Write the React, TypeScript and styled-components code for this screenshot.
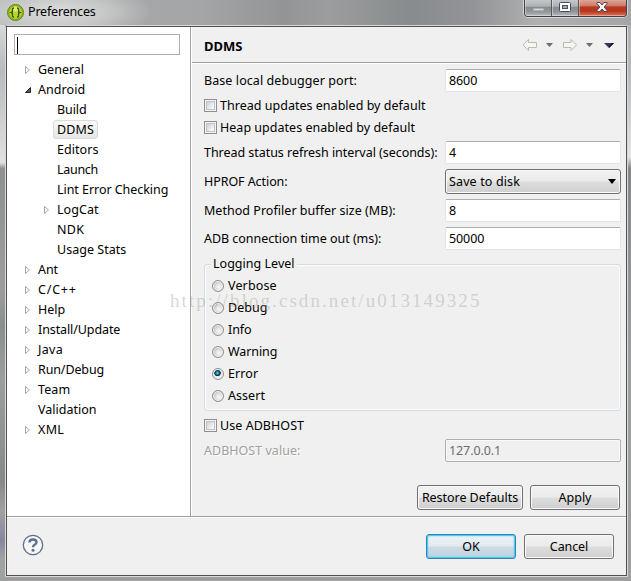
import React from 'react';
import styled, { createGlobalStyle, css } from 'styled-components';

const GlobalStyle = createGlobalStyle`
  * { box-sizing: border-box; }
  body { margin: 0; overflow: hidden; background: #9a9d9d; }
  body, input, button { font: 12.5px/20px "Noto Sans", "Open Sans", sans-serif; color: #000; }
`;

const Window = styled.main`
  position: relative;
  width: 631px;
  height: 581px;
  padding: 0 3px 4px 5px;
  display: flex;
  flex-direction: column;
  overflow: hidden;
  background:
    linear-gradient(#e9eaea, #b7bbbd 12%, #e0e1e1 28%, #8e9191 29%, #9b9e9d 50%, #898e8f 56%, #9c9f9f 65%, #858988 83%, #a0a2a1 88%, #8786a0 93%, #9fa2a2 96%) 0 0 / 5px 100% no-repeat,
    linear-gradient(#adb1b3, #b6b8ba 12%, #e4e4e4 27%, #858687 29%, #9d9fa0 60%, #a0a0a0) right top / 4px 100% no-repeat,
    #9e9e9e;
`;

const TitleBar = styled.header`
  height: 25px;
  margin: 0 -3px 0 -5px;
  padding: 0 4px 0 7px;
  flex: none;
  display: flex;
  align-items: flex-start;
  gap: 5px;
  background:
    radial-gradient(ellipse 95px 28px at 58px 12px, #dcdddd 0, rgba(205, 207, 207, .75) 55%, transparent 100%),
    linear-gradient(90deg, #b5b8b8 0, #a5a7a8 20%, #a3a5a6 32%, #929496 45%, #9b9d9e 52%, #888b8d 65%, #929497 75%, #b0b0b1 85%, #a3a5a7 100%);
`;

const AppIcon = styled.svg`
  width: 17px;
  height: 17px;
  margin-top: 4px;
  flex: none;
`;

const Title = styled.h1`
  flex: 1;
  margin: 2px 0 0 -1px;
  font: inherit;
  letter-spacing: -0.18px;
`;

const Controls = styled.div`
  display: flex;
  width: 103px;
  height: 17px;
  border: 1px solid #3d4147;
  border-top: 0;
  border-radius: 0 0 4px 4px;
  box-shadow: 0 0 0 1px rgba(235, 237, 238, .65);
  overflow: hidden;
`;

const Control = styled.button<{ $close?: boolean }>`
  flex: ${p => (p.$close ? '0 0 47px' : '0 0 27px')};
  padding: 0;
  display: flex;
  align-items: flex-start;
  justify-content: center;
  border: 0;
  border-right: 1px solid ${p => (p.$close ? 'transparent' : '#53585c')};
  box-shadow: inset 1px -1px rgba(255, 255, 255, .38);
  background: ${p => p.$close
    ? 'linear-gradient(#dda69b 0, #ce7868 38%, #b73b25 42%, #b5351c 68%, #df7358 100%)'
    : 'linear-gradient(#c4c7c9 0, #adb1b4 40%, #85898c 43%, #92969a 72%, #b6babd 100%)'};
  svg { display: block; margin-top: 1px; }
`;

const Client = styled.div`
  flex: 1;
  min-height: 0;
  display: flex;
  flex-direction: column;
  border: 1px solid #d9dbdb;
  border-radius: 3px 3px 0 0;
`;

const Dialog = styled.div`
  flex: 1;
  min-height: 0;
  display: flex;
  flex-direction: column;
  border: 1px solid #505050;
  background: #f0f0f0;
`;

const Body = styled.div`
  display: flex;
  height: 490px;
  flex: none;
  border-bottom: 1px solid #a0a0a0;
`;

const Sidebar = styled.nav`
  width: 184px;
  flex: none;
  padding: 7px 10px 0 7px;
  border-right: 1px solid #a0a0a0;
  background: #fff;
`;

const Search = styled.div`
  height: 21px;
  padding: 2px;
  border: 1px solid #abadb3;
  margin-bottom: 4px;
  &::before {
    content: '';
    display: block;
    width: 1px;
    height: 17px;
    background: #000;
  }
`;

const Tree = styled.ul`
  list-style: none;
  margin: 0;
  padding: 0;
`;

const TreeItem = styled.li<{ $child?: boolean }>`
  height: 20px;
  padding-left: ${p => (p.$child ? 29 : 10)}px;
  display: flex;
  align-items: center;
  svg { width: 9px; height: 10px; flex: none; margin: 2px 1px 0 0; }
`;

const TreeLabel = styled.span<{ $ls: number; $selected?: boolean }>`
  padding: 0 3px;
  height: 19px;
  line-height: 17px;
  border: 1px solid transparent;
  white-space: nowrap;
  letter-spacing: ${p => p.$ls}px;
  ${p => p.$selected && css`
    border-color: #dadada;
    border-radius: 3px;
    background: linear-gradient(#fafafa, #e6e6e6);
  `}
`;

const Page = styled.section`
  flex: 1;
  display: flex;
  flex-direction: column;
  border-left: 1px solid #fff;
`;

const PageHeader = styled.div`
  height: 36px;
  padding: 1px 10px 0 12px;
  display: flex;
  align-items: center;
  border-bottom: 1px solid #a0a0a0;
  box-shadow: 0 1px #fff;
`;

const PageTitle = styled.h2`
  flex: 1;
  margin: 1px 0 0;
  font-size: 13px;
  font-weight: 700;
  letter-spacing: 0;
`;

const Form = styled.form`
  padding: 6px 5px 0 12px;
`;

const Row = styled.div<{ $gap: number; $h?: number }>`
  height: ${p => p.$h ?? 23}px;
  margin-bottom: ${p => p.$gap}px;
  display: flex;
  align-items: center;
`;

const Label = styled.label<{ $ls: number; $disabled?: boolean }>`
  flex: none;
  width: 241px;
  white-space: nowrap;
  letter-spacing: ${p => p.$ls}px;
  ${p => p.$disabled && css`color: #a0a0a0; text-shadow: 1px 1px #fff;`}
`;

const Field = styled.input`
  width: 176px;
  height: 23px;
  padding: 0 3px;
  border: 1px solid #e2e3ea;
  border-top-color: #abadb3;
  border-radius: 2px;
  outline: 0;
  background: #fff;
  letter-spacing: -0.1px;
  &:disabled {
    color: #6d6d6d;
    border-color: #afafaf;
    background: #f0f0f0;
    box-shadow: inset 0 0 0 1px #fafafa;
  }
`;

const Select = styled.div`
  width: 176px;
  height: 25px;
  padding: 0 4px 0 3px;
  display: flex;
  align-items: center;
  justify-content: space-between;
  border: 1px solid #707070;
  border-radius: 3px;
  box-shadow: inset 0 0 0 1px #fafafa;
  background: linear-gradient(#f2f2f2 0, #ebebeb 48%, #dddddd 52%, #cfcfcf 100%);
  letter-spacing: 0.13px;
`;

const CheckRow = styled.label<{ $ls: number }>`
  height: 22px;
  display: flex;
  align-items: center;
  gap: 3px;
  white-space: nowrap;
  letter-spacing: ${p => p.$ls}px;
`;

const CheckList = styled.div`
  margin-bottom: 2px;
`;

const CheckBox = styled.span`
  width: 13px;
  height: 13px;
  margin-top: -1px;
  flex: none;
  border: 1px solid #8e8f8f;
  background: linear-gradient(135deg, #cbcfd5, #f6f6f6 80%) center / 7px 7px no-repeat, #f4f4f4;
  box-shadow: inset 0 0 0 1px #f4f4f4, inset 0 0 0 2px #bfc4cb;
`;

const Group = styled.fieldset`
  height: 156px;
  width: 417px;
  margin: 5px 0 4px;
  padding: 2px 7px 0;
  min-width: 0;
  border: 1px solid #d0dce6;
  border-radius: 3px;
  box-shadow: inset 0 0 0 1px #fcfcfc;
  legend {
    height: 18px;
    line-height: 18px;
    margin-left: -1px;
    padding: 0 2px;
    background: #f0f0f0;
    letter-spacing: 0.02px;
  }
`;

const Radio = styled.span<{ $on?: boolean }>`
  width: 12px;
  height: 12px;
  flex: none;
  margin-right: 1px;
  border: 1px solid #8e8f8f;
  border-radius: 50%;
  box-shadow: inset 0 0 0 1px #f4f4f4;
  background: ${p => p.$on
    ? 'radial-gradient(circle at 45% 40%, #8fe0f5 0, #1c7fa9 17%, #0b3d5c 32%, #17364d 37%, #eaeaea 43%)'
    : 'radial-gradient(circle at 60% 60%, #f4f4f4 10%, #dcdee0 40%, #c3c7cb 62%)'};
`;

const Button = styled.button<{ $w: number; $primary?: boolean; $ls?: number }>`
  width: ${p => p.$w}px;
  height: 25px;
  padding: 0;
  white-space: nowrap;
  letter-spacing: ${p => p.$ls ?? 0}px;
  border: 1px solid #707070;
  border-radius: 3px;
  box-shadow: inset 0 0 0 1px #fafafa;
  background: linear-gradient(#f2f2f2 0, #ebebeb 48%, #dddddd 52%, #cfcfcf 100%);
  ${p => p.$primary && css`
    border-color: #3c7fb1;
    box-shadow: inset 0 0 0 1px #43cdf3, inset 0 0 2px 1px #6fd6f5;
    background: linear-gradient(#edf3f6 0, #e1ebf0 48%, #cbdce5 52%, #bfd3df 100%);
  `}
`;

const PageActions = styled.div`
  display: flex;
  justify-content: flex-end;
  gap: 7px;
  padding: 23px 1px 0 0;
`;

const Footer = styled.footer`
  flex: 1;
  display: flex;
  align-items: center;
  gap: 8px;
  padding: 0 12px 0 15px;
  border-top: 1px solid #fff;
`;

const HelpButton = styled.svg`
  width: 22px;
  height: 22px;
  margin: 0 auto 3px 0;
`;

const Watermark = styled.div`
  position: absolute;
  left: 170px;
  top: 289px;
  font: 19px/24px "Liberation Serif", serif;
  letter-spacing: 2.08px;
  white-space: nowrap;
  color: rgba(155, 155, 140, .38);
  pointer-events: none;
`;

type Node = { name: string; ls: number; child?: boolean; state?: 'open' | 'closed'; selected?: boolean };

const nodes: Node[] = [
  { name: 'General', ls: 0, state: 'closed' },
  { name: 'Android', ls: 0.05, state: 'open' },
  { name: 'Build', ls: -0.1, child: true },
  { name: 'DDMS', ls: 0.1, child: true, selected: true },
  { name: 'Editors', ls: 0.05, child: true },
  { name: 'Launch', ls: -0.3, child: true },
  { name: 'Lint Error Checking', ls: -0.05, child: true },
  { name: 'LogCat', ls: 0.05, child: true, state: 'closed' },
  { name: 'NDK', ls: 0.3, child: true },
  { name: 'Usage Stats', ls: 0.03, child: true },
  { name: 'Ant', ls: -0.1, state: 'closed' },
  { name: 'C/C++', ls: 0.8, state: 'closed' },
  { name: 'Help', ls: 0, state: 'closed' },
  { name: 'Install/Update', ls: -0.1, state: 'closed' },
  { name: 'Java', ls: 0.3, state: 'closed' },
  { name: 'Run/Debug', ls: -0.12, state: 'closed' },
  { name: 'Team', ls: 0.1, state: 'closed' },
  { name: 'Validation', ls: 0 },
  { name: 'XML', ls: 0.3, state: 'closed' },
];

const levels: [string, number][] = [
  ['Verbose', 0.15], ['Debug', 0.03], ['Info', -0.05], ['Warning', -0.1], ['Error', 0.1], ['Assert', 0.05],
];

const Twisty = ({ open }: { open: boolean }) => (
  <svg viewBox="0 0 9 10">
    {open
      ? <path d="M6.5 2.5v5h-5z" fill="#595959" stroke="#262626" />
      : <path d="M1.5 1.5v7l4-3.5z" fill="#fff" stroke="#a5a5a5" />}
  </svg>
);

const NavArrows = () => (
  <svg width="94" height="14" viewBox="0 0 94 14">
    <g fill="#f7f6f0" stroke="#bdb9af">
      <path d="M1 7l5.500-5.500V4.500H14.500v5H6.500v3z" />
      <path d="M54.500 7L49 1.500V4.500H41.500v5H49v3z" />
    </g>
    <path d="M24 5h7l-3.500 4z" fill="#6d6d6d" />
    <path d="M64 5h7l-3.500 4z" fill="#6d6d6d" />
    <path d="M82 5h10l-5 5z" fill="#37345b" />
    <path d="M87 9l3-4h2l-5 5z" fill="#090909" />
  </svg>
);

export default function App() {
  return (
    <>
      <GlobalStyle />
      <Window>
        <TitleBar>
          <AppIcon viewBox="0 0 17 17">
            <circle cx="8.500" cy="8.500" r="8" fill="#8fb51a" stroke="#66851b" />
            <circle cx="8.500" cy="8.500" r="6.200" fill="#b7d62a" />
            <ellipse cx="8.500" cy="5" rx="4" ry="2.500" fill="#dced72" />
            <path d="M7 4Q5 4 5.500 6.500Q5.800 8 4.300 8.500Q5.800 9 5.500 10.500Q5 13 7 13M10 4Q12 4 11.500 6.500Q11.200 8 12.700 8.500Q11.200 9 11.500 10.500Q12 13 10 13" fill="none" stroke="#3c5414" strokeWidth="1.400" />
          </AppIcon>
          <Title>Preferences</Title>
          <Controls>
            <Control aria-label="Minimize">
              <svg width="14" height="14"><rect x="2.500" y="7.500" width="10" height="2" fill="#d7d9da" stroke="#a9adb0" /></svg>
            </Control>
            <Control aria-label="Maximize">
              <svg width="14" height="14">
                <rect x="1.500" y="1.500" width="11" height="9" rx="1" fill="#fff" stroke="#4a4c63" />
                <rect x="4.500" y="4.500" width="5" height="3" fill="#a6aab2" stroke="#4a4c63" />
              </svg>
            </Control>
            <Control $close aria-label="Close">
              <svg width="14" height="14">
                <path d="M2 1.500h3L7 4l2-2.500h3v1L9.200 6l2.800 3.500v1H9L7 8l-2 2.500H2v-1L4.800 6 2 2.500z" fill="#f7f7f7" stroke="#53434d" />
              </svg>
            </Control>
          </Controls>
        </TitleBar>
        <Client>
          <Dialog>
            <Body>
              <Sidebar>
                <Search role="textbox" />
                <Tree>
                  {nodes.map(n => (
                    <TreeItem key={n.name} $child={n.child}>
                      {n.state ? <Twisty open={n.state === 'open'} /> : <svg />}
                      <TreeLabel $ls={n.ls} $selected={n.selected}>{n.name}</TreeLabel>
                    </TreeItem>
                  ))}
                </Tree>
              </Sidebar>
              <Page>
                <PageHeader>
                  <PageTitle>DDMS</PageTitle>
                  <NavArrows />
                </PageHeader>
                <Form>
                  <Row $gap={3}>
                    <Label $ls={0.08}>Base local debugger port:</Label>
                    <Field defaultValue="8600" />
                  </Row>
                  <CheckList>
                    <CheckRow $ls={0.02}><CheckBox />Thread updates enabled by default</CheckRow>
                    <CheckRow $ls={0.02}><CheckBox />Heap updates enabled by default</CheckRow>
                  </CheckList>
                  <Row $gap={5}>
                    <Label $ls={-0.04}>Thread status refresh interval (seconds):</Label>
                    <Field defaultValue="4" />
                  </Row>
                  <Row $gap={5} $h={25}>
                    <Label $ls={-0.07}>HPROF Action:</Label>
                    <Select>
                      Save to disk
                      <svg width="8" height="5"><path d="M0 0h8L4 5z" /></svg>
                    </Select>
                  </Row>
                  <Row $gap={5}>
                    <Label $ls={0.03}>Method Profiler buffer size (MB):</Label>
                    <Field defaultValue="8" />
                  </Row>
                  <Row $gap={5}>
                    <Label $ls={-0.03}>ADB connection time out (ms):</Label>
                    <Field defaultValue="50000" />
                  </Row>
                  <Group>
                    <legend>Logging Level</legend>
                    {levels.map(([name, ls]) => (
                      <CheckRow key={name} $ls={ls}>
                        <Radio $on={name === 'Error'} />{name}
                      </CheckRow>
                    ))}
                  </Group>
                  <CheckRow $ls={0.05}><CheckBox />Use ADBHOST</CheckRow>
                  <CheckList />
                  <Row $gap={0}>
                    <Label $ls={0.02} $disabled>ADBHOST value:</Label>
                    <Field disabled defaultValue="127.0.0.1" />
                  </Row>
                  <PageActions>
                    <Button type="button" $w={106} $ls={-0.05}>Restore Defaults</Button>
                    <Button type="button" $w={90}>Apply</Button>
                  </PageActions>
                </Form>
              </Page>
            </Body>
            <Footer>
              <HelpButton viewBox="0 0 22 22">
                <circle cx="11" cy="11" r="9.700" fill="#f7f7f8" stroke="#5b6f8e" strokeWidth="1.300" />
                <path d="M7.500 8.500Q7.500 5.500 11 5.500T14.500 8.300Q14.500 10 12.500 10.800Q11 11.500 11 13.300" fill="none" stroke="#5b6f8e" strokeWidth="2.400" />
                <circle cx="11" cy="16.200" r="1.500" fill="#5b6f8e" />
              </HelpButton>
              <Button $w={90} $primary>OK</Button>
              <Button $w={90} $ls={-0.1}>Cancel</Button>
            </Footer>
          </Dialog>
        </Client>
        <Watermark>http://blog.csdn.net/u013149325</Watermark>
      </Window>
    </>
  );
}
